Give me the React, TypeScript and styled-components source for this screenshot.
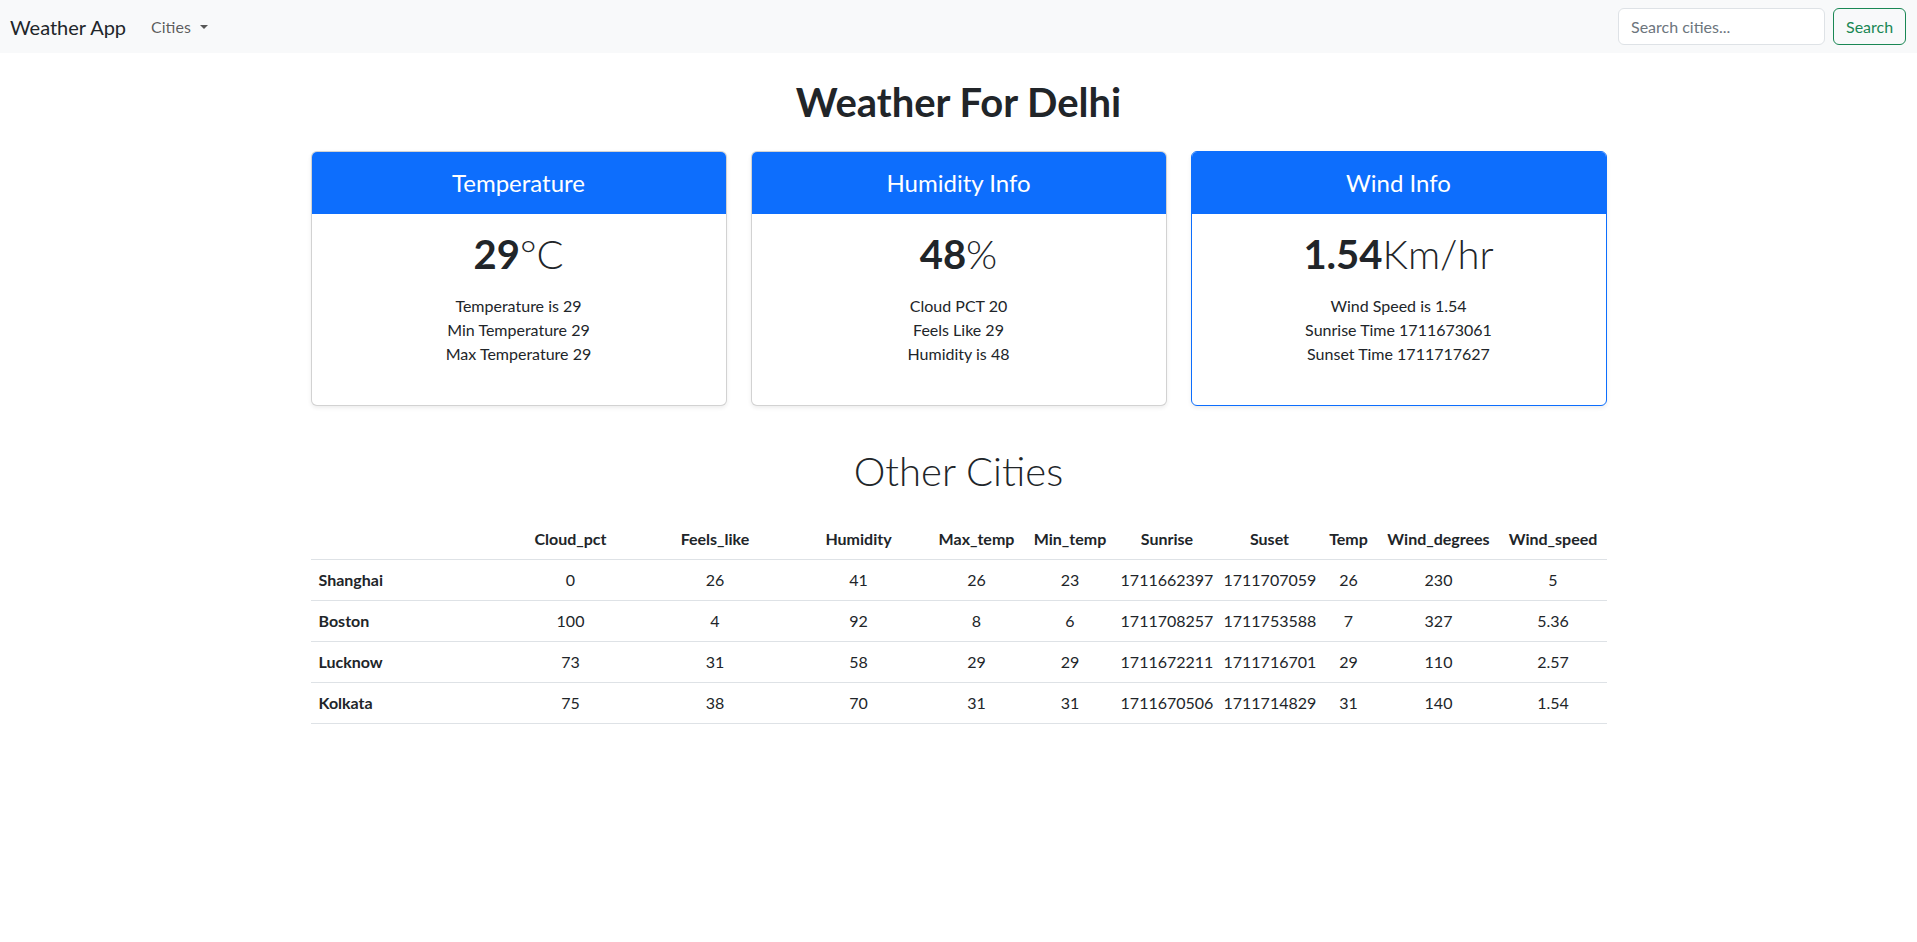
import React from "react";
import styled, { createGlobalStyle } from "styled-components";

const FONT = `"Segoe UI", Lato, "Noto Sans", "Liberation Sans", Arial, sans-serif`;

const GlobalStyle = createGlobalStyle`
  *, *::before, *::after { box-sizing: border-box; }
  html, body { margin: 0; padding: 0; background: #fff; }
  body {
    font-family: ${FONT};
    font-size: 16px;
    line-height: 1.5;
    color: #212529;
  }
`;

const Navbar = styled.nav`
  height: 53px;
  background: #f8f9fa;
  display: flex;
  align-items: center;
  justify-content: space-between;
  padding: 0 11px 0 10px;
`;

const NavLeft = styled.div`
  display: flex;
  align-items: center;
`;

const Brand = styled.a`
  font-size: 20px;
  line-height: 30px;
  color: #212529;
  text-decoration: none;
  margin-right: 25px;
`;

const DropdownToggle = styled.button`
  background: none;
  border: 0;
  padding: 8px 0;
  font: inherit;
  font-size: 16px;
  color: rgba(0, 0, 0, 0.65);
  display: flex;
  align-items: center;
  gap: 9px;
  cursor: pointer;
`;

const Caret = styled.span`
  display: inline-block;
  width: 0;
  height: 0;
  border-top: 4px solid currentColor;
  border-left: 4px solid transparent;
  border-right: 4px solid transparent;
  margin-top: 1px;
`;

const SearchForm = styled.form`
  display: flex;
  align-items: center;
  gap: 8px;
`;

const SearchInput = styled.input`
  width: 207px;
  height: 37px;
  padding: 6px 12px;
  font: inherit;
  font-size: 16px;
  color: #212529;
  background: #fff;
  border: 1px solid #dee2e6;
  border-radius: 6px;
  outline: none;
  &::placeholder {
    color: #6c757d;
  }
`;

const OutlineButton = styled.button`
  width: 73px;
  height: 37px;
  padding: 6px 12px;
  font: inherit;
  font-size: 16px;
  color: #198754;
  background: transparent;
  border: 1px solid #198754;
  border-radius: 6px;
  cursor: pointer;
`;

const Container = styled.main`
  max-width: 1320px;
  margin: 0 auto;
  padding: 0 12px;
`;

const Title = styled.h1`
  margin: 25px 0 0;
  font-size: 40px;
  line-height: 48px;
  font-weight: 700;
  text-align: center;
  color: #212529;
`;

const CardRow = styled.section`
  display: grid;
  grid-template-columns: repeat(3, 1fr);
  gap: 24px;
  margin-top: 25px;
`;

const Card = styled.div<{ $active?: boolean }>`
  height: 255px;
  border: 1px solid ${(p) => (p.$active ? "#0d6efd" : "rgba(0,0,0,0.175)")};
  border-radius: 6px;
  box-shadow: 0 2px 4px rgba(0, 0, 0, 0.075);
  overflow: hidden;
  display: flex;
  flex-direction: column;
  background: #fff;
`;

const CardHeader = styled.div`
  height: 62px;
  background: #0d6efd;
  color: #fff;
  font-size: 24px;
  display: flex;
  align-items: center;
  justify-content: center;
`;

const CardBody = styled.div`
  padding: 16px;
  text-align: center;
`;

const BigValue = styled.div`
  font-size: 40px;
  line-height: 48px;
  font-weight: 700;
  margin-bottom: 16px;
`;

const Unit = styled.span`
  font-weight: 300;
`;

const InfoLine = styled.div`
  font-size: 16px;
  line-height: 24px;
`;

const SectionTitle = styled.h2`
  margin: 41px 0 0;
  font-size: 40px;
  line-height: 48px;
  font-weight: 300;
  text-align: center;
`;

const Table = styled.table`
  width: 100%;
  margin-top: 24px;
  border-collapse: collapse;
  table-layout: fixed;
  color: #212529;
`;

const HeadCell = styled.th`
  padding: 8px 4px;
  line-height: 24px;
  font-weight: 700;
  text-align: center;
  border-bottom: 1px solid #dee2e6;
  white-space: nowrap;
`;

const RowHead = styled.th`
  padding: 8px;
  line-height: 24px;
  font-weight: 700;
  text-align: left;
  border-bottom: 1px solid #dee2e6;
`;

const Cell = styled.td`
  padding: 8px 4px;
  line-height: 24px;
  text-align: center;
  border-bottom: 1px solid #dee2e6;
  white-space: nowrap;
`;

const colWidths = [190, 140, 149, 138, 98, 89, 105, 100, 58, 122, 107];
const headers = [
  "",
  "Cloud_pct",
  "Feels_like",
  "Humidity",
  "Max_temp",
  "Min_temp",
  "Sunrise",
  "Suset",
  "Temp",
  "Wind_degrees",
  "Wind_speed",
];

const rows: [string, ...(string | number)[]][] = [
  ["Shanghai", 0, 26, 41, 26, 23, 1711662397, 1711707059, 26, 230, 5],
  ["Boston", 100, 4, 92, 8, 6, 1711708257, 1711753588, 7, 327, 5.36],
  ["Lucknow", 73, 31, 58, 29, 29, 1711672211, 1711716701, 29, 110, 2.57],
  ["Kolkata", 75, 38, 70, 31, 31, 1711670506, 1711714829, 31, 140, 1.54],
];

const cards = [
  {
    title: "Temperature",
    value: "29",
    unit: "°C",
    lines: ["Temperature is 29", "Min Temperature 29", "Max Temperature 29"],
  },
  {
    title: "Humidity Info",
    value: "48",
    unit: "%",
    lines: ["Cloud PCT 20", "Feels Like 29", "Humidity is 48"],
  },
  {
    title: "Wind Info",
    value: "1.54",
    unit: "Km/hr",
    lines: ["Wind Speed is 1.54", "Sunrise Time 1711673061", "Sunset Time 1711717627"],
    active: true,
  },
];

export default function App() {
  return (
    <>
      <GlobalStyle />
      <Navbar>
        <NavLeft>
          <Brand href="#">Weather App</Brand>
          <DropdownToggle type="button">
            Cities
            <Caret />
          </DropdownToggle>
        </NavLeft>
        <SearchForm onSubmit={(e) => e.preventDefault()}>
          <SearchInput type="search" placeholder="Search cities..." />
          <OutlineButton type="submit">Search</OutlineButton>
        </SearchForm>
      </Navbar>
      <Container>
        <Title>Weather For Delhi</Title>
        <CardRow>
          {cards.map((c) => (
            <Card key={c.title} $active={c.active}>
              <CardHeader>{c.title}</CardHeader>
              <CardBody>
                <BigValue>
                  {c.value}
                  <Unit>{c.unit}</Unit>
                </BigValue>
                {c.lines.map((l) => (
                  <InfoLine key={l}>{l}</InfoLine>
                ))}
              </CardBody>
            </Card>
          ))}
        </CardRow>
        <SectionTitle>Other Cities</SectionTitle>
        <Table>
          <colgroup>
            {colWidths.map((w, i) => (
              <col key={i} style={{ width: w }} />
            ))}
          </colgroup>
          <thead>
            <tr>
              {headers.map((h, i) => (
                <HeadCell key={i}>{h}</HeadCell>
              ))}
            </tr>
          </thead>
          <tbody>
            {rows.map(([name, ...vals]) => (
              <tr key={name}>
                <RowHead>{name}</RowHead>
                {vals.map((v, i) => (
                  <Cell key={i}>{v}</Cell>
                ))}
              </tr>
            ))}
          </tbody>
        </Table>
      </Container>
    </>
  );
}
